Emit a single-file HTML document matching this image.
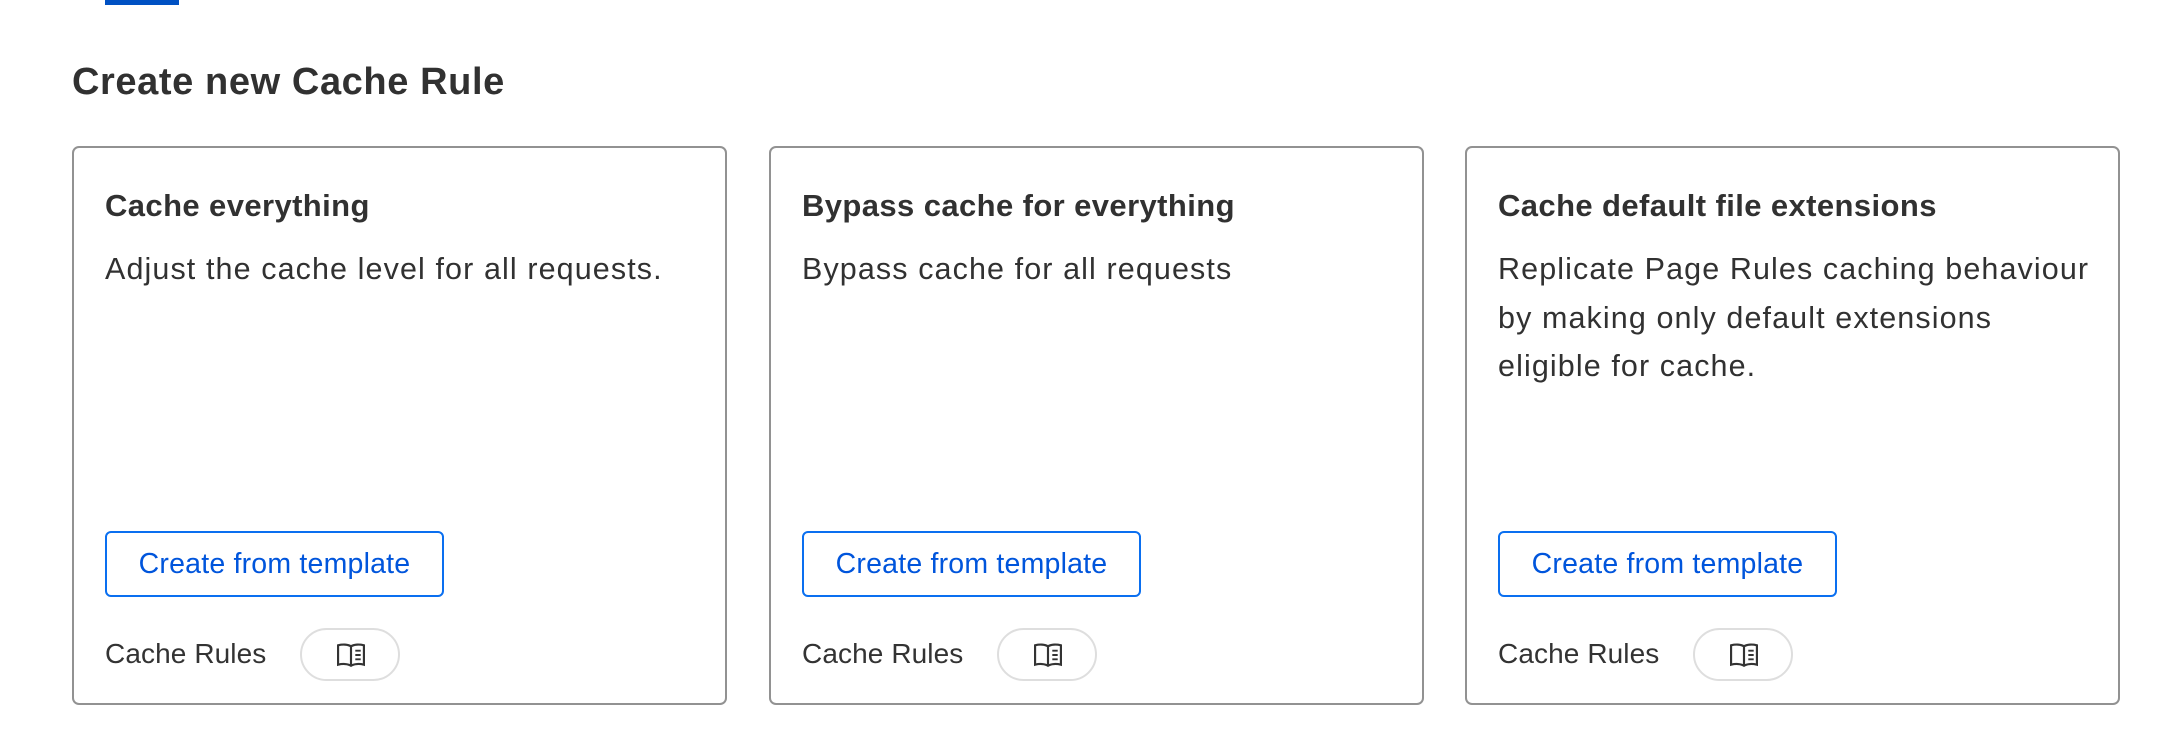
<!DOCTYPE html>
<html><head><meta charset="utf-8"><style>
*{margin:0;padding:0;box-sizing:border-box}
html,body{width:2170px;height:748px;background:#fff;overflow:hidden;font-family:"Liberation Sans",Arial,sans-serif;color:#313131}
.tab{position:absolute;left:105px;top:0;width:74px;height:5px;background:#0051c3}
h1{position:absolute;left:72px;top:58px;font-size:38px;font-weight:bold;line-height:48px;color:#313131;letter-spacing:0.6px}
.card{position:absolute;top:146px;width:655px;height:559px;border:2px solid #929292;border-radius:7px}
.t{position:absolute;left:31px;top:38px;font-size:31px;font-weight:bold;line-height:40px;white-space:nowrap;letter-spacing:0.4px}
.d{position:absolute;left:31px;top:97px;font-size:30.5px;line-height:48.5px;white-space:nowrap;letter-spacing:1.1px}
.btn{position:absolute;left:31px;top:383px;width:339px;height:66px;border:2px solid #0a6ff0;border-radius:6px;color:#0055dc;font-size:28.5px;line-height:62px;text-align:center;letter-spacing:0.2px}
.f{position:absolute;left:31px;top:488px;font-size:28px;line-height:36px;color:#333;letter-spacing:0.1px}
.pill{position:absolute;left:226px;top:480px;width:100px;height:53px;border:2px solid #dedede;border-radius:27px}
.pill svg{position:absolute;left:35px;top:12px}
</style></head><body>
<div class="tab"></div>
<h1>Create new Cache Rule</h1>

<div class="card" style="left:72px">
<div class="t">Cache everything</div>
<div class="d">Adjust the cache level for all requests.</div>
<div class="btn">Create from template</div>
<div class="f">Cache Rules</div>
<div class="pill"><svg width="28" height="26" viewBox="0 0 26 24" fill="none" stroke="#333" stroke-width="2"><path d="M13 4 V22 M13 4 C10 2 5 2 1 3 V21 C5 20 10 20 13 22 C16 20 21 20 25 21 V3 C21 2 16 2 13 4"/><path d="M17 8h5M17 12h5M17 16h5" stroke-width="1.8"/></svg></div>
</div>

<div class="card" style="left:769px">
<div class="t">Bypass cache for everything</div>
<div class="d">Bypass cache for all requests</div>
<div class="btn">Create from template</div>
<div class="f">Cache Rules</div>
<div class="pill"><svg width="28" height="26" viewBox="0 0 26 24" fill="none" stroke="#333" stroke-width="2"><path d="M13 4 V22 M13 4 C10 2 5 2 1 3 V21 C5 20 10 20 13 22 C16 20 21 20 25 21 V3 C21 2 16 2 13 4"/><path d="M17 8h5M17 12h5M17 16h5" stroke-width="1.8"/></svg></div>
</div>

<div class="card" style="left:1465px">
<div class="t">Cache default file extensions</div>
<div class="d">Replicate Page Rules caching behaviour<br>by making only default extensions<br>eligible for cache.</div>
<div class="btn">Create from template</div>
<div class="f">Cache Rules</div>
<div class="pill"><svg width="28" height="26" viewBox="0 0 26 24" fill="none" stroke="#333" stroke-width="2"><path d="M13 4 V22 M13 4 C10 2 5 2 1 3 V21 C5 20 10 20 13 22 C16 20 21 20 25 21 V3 C21 2 16 2 13 4"/><path d="M17 8h5M17 12h5M17 16h5" stroke-width="1.8"/></svg></div>
</div>
</body></html>
